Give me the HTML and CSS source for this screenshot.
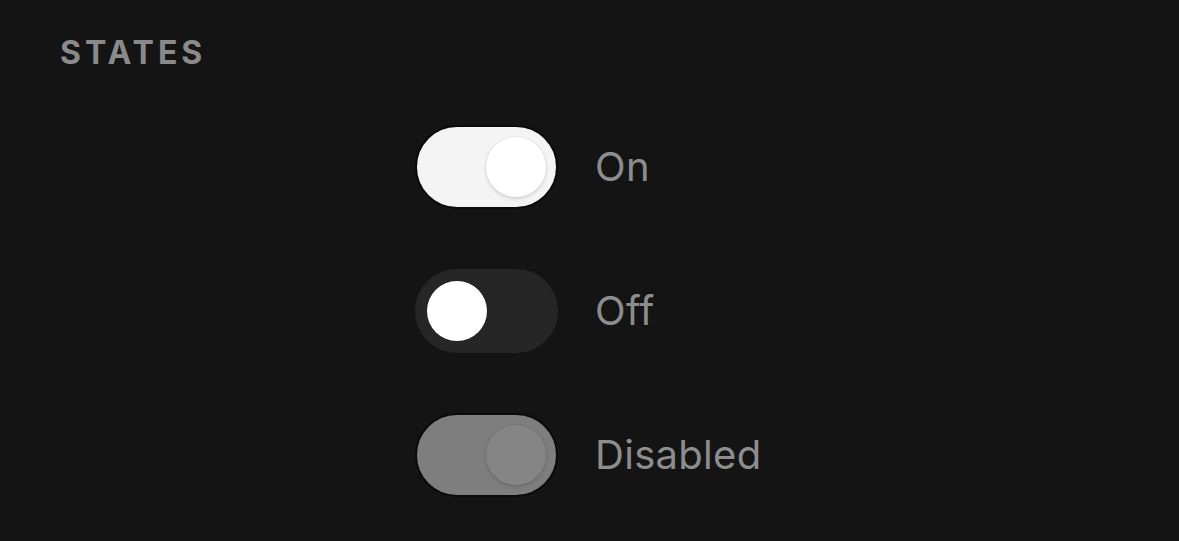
FILE: index.html
```html
<!DOCTYPE html>
<html>
<head>
	<title>Switch states</title>
	<meta name="viewport" content="width=device-width, initial-scale=1.0">
	<link rel="stylesheet" href="styles.css">
</head>
<body>
	<h2 class="section-title">STATES</h2>

	<div class="switch-list">
		<div class="switch-row">
			<div class="switch switch-on"><span class="knob"></span></div>
			<span class="switch-label">On</span>
		</div>
		<div class="switch-row">
			<div class="switch switch-off"><span class="knob"></span></div>
			<span class="switch-label">Off</span>
		</div>
		<div class="switch-row">
			<div class="switch switch-disabled"><span class="knob"></span></div>
			<span class="switch-label">Disabled</span>
		</div>
	</div>
</body>
</html>
```
FILE: styles.css
```css
body {
	margin: 0;
	padding: 33px 0 0 60px;
	background-color: #141414;
	font-family: Inter, "Liberation Sans", sans-serif;
	color: #8c8c8c;
}

.section-title {
	margin: 0;
	font-size: 32px;
	line-height: 40px;
	font-weight: 700;
	letter-spacing: 4px;
	color: #8a8a8a;
}

.switch-list {
	display: flex;
	flex-direction: column;
	gap: 60px;
	margin-top: 52px;
	padding-left: 355px;
}

.switch-row {
	display: flex;
	align-items: center;
	height: 84px;
}

.switch {
	display: flex;
	align-items: center;
	box-sizing: border-box;
	width: 143px;
	height: 84px;
	padding: 0 10px;
	border: 2px solid #0b0b0b;
	border-radius: 42px;
}

.knob {
	width: 60px;
	height: 60px;
	border-radius: 50%;
	background-color: #ffffff;
}

.switch-on {
	justify-content: flex-end;
	background-color: #f4f4f4;
}

.switch-on .knob {
	box-shadow: 0 2px 4px rgba(0, 0, 0, 0.12), 0 0 0 1px rgba(0, 0, 0, 0.04);
}

.switch-off {
	justify-content: flex-start;
	background-color: #262626;
	border-color: #262626;
}

.switch-disabled {
	justify-content: flex-end;
	background-color: #7e7e7e;
}

.switch-disabled .knob {
	background-color: #858585;
	box-shadow: 0 2px 4px rgba(0, 0, 0, 0.12), 0 0 0 1px rgba(0, 0, 0, 0.04);
}

.switch-label {
	margin-left: 37px;
	font-size: 40px;
	line-height: 48px;
	letter-spacing: 0.3px;
	color: #8d8d8d;
}
```
